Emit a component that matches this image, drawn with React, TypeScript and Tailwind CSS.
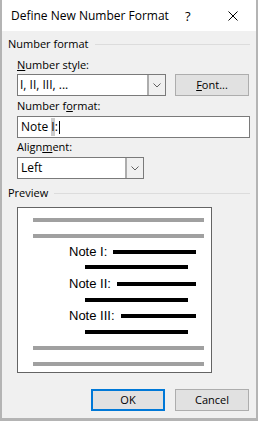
import React from "react";

function Chevron() {
  return (
    <svg width="8" height="5" viewBox="0 0 8 5">
      <path d="M0.5 0.5 L4 4 L7.5 0.5" fill="none" stroke="#606060" strokeWidth="1" />
    </svg>
  );
}

function DropButton() {
  return (
    <div className="w-[18px] h-full flex items-center justify-center border-l-2 border-[#adadad] bg-[#f0f0f0]">
      <Chevron />
    </div>
  );
}

function GroupHeader({ label, mt }: { label: string; mt: string }) {
  return (
    <div className={`flex items-center h-[16px] ${mt}`}>
      <span className="leading-[16px]">{label}</span>
      <div className="flex-1 h-px bg-[#dcdcdc] ml-[6px]" />
    </div>
  );
}

function NoteRow({ label, mt }: { label: string; mt: string }) {
  return (
    <div className={`flex items-center h-[16px] ml-[36px] w-[127px] ${mt}`}>
      <span className="font-['Liberation_Sans'] text-[13px] leading-[16px] text-black">{label}</span>
      <div className="flex-1 h-[4px] bg-black ml-[6px]" />
    </div>
  );
}

function SubLine({ mt }: { mt: string }) {
  return <div className={`ml-[52px] w-[103px] h-[4px] bg-black ${mt}`} />;
}

export default function App() {
  return (
    <div className="w-[258px] h-[421px] border-x-2 border-b-[3px] border-[#b4b4b4] bg-[#f0f0f0] flex flex-col font-['Open_Sans'] text-[11px] text-black">
      {/* Title bar */}
      <div className="h-[31px] bg-white flex items-center pl-[9px] shrink-0">
        <span className="flex-1 text-[12px] leading-[16px]">Define New Number Format</span>
        <span className="text-[13px] leading-[16px] w-[7px]">?</span>
        <svg width="10" height="10" viewBox="0 0 10 10" className="ml-[36px] mr-[18px]">
          <path d="M0.5 0.5 L9.5 9.5 M9.5 0.5 L0.5 9.5" stroke="#000" strokeWidth="1" />
        </svg>
      </div>

      {/* Body */}
      <div className="px-[6px] flex flex-col">
        <GroupHeader label="Number format" mt="mt-[5px]" />

        <div className="pl-[9px] flex flex-col">
          <div className="leading-[16px] h-[16px] mt-[5px]">
            <span className="underline underline-offset-[1px]">N</span>umber style:
          </div>
          <div className="flex mt-[1px]">
            <div className="flex w-[149px] h-[22px] bg-white border border-[#7a7a7a]">
              <div className="flex-1 flex items-center pl-[2px] text-[12px]">I, II, III, ...</div>
              <DropButton />
            </div>
            <div className="ml-[9px] w-[74px] h-[22px] bg-[#e1e1e1] border border-[#adadad] flex items-center justify-center">
              <span>
                <span className="underline underline-offset-[1px]">F</span>ont...
              </span>
            </div>
          </div>

          <div className="leading-[16px] h-[16px] mt-[2px]">
            Number f<span className="underline underline-offset-[1px]">o</span>rmat:
          </div>
          <div className="mt-[2px] w-[233px] h-[22px] bg-white border border-[#7a7a7a] flex items-center pl-[3px] text-[12px]">
            <span>Note </span>
            <span className="bg-[#cccccc] ml-[3px]">I</span>
            <span>:</span>
            <span className="w-px h-[13px] bg-black ml-[1px]" />
          </div>

          <div className="leading-[16px] h-[16px] mt-[1px]">
            Align<span className="underline underline-offset-[1px]">m</span>ent:
          </div>
          <div className="mt-[2px] flex w-[127px] h-[22px] bg-white border border-[#7a7a7a]">
            <div className="flex-1 flex items-center pl-[3px] text-[12px]">Left</div>
            <DropButton />
          </div>
        </div>

        <GroupHeader label="Preview" mt="mt-[6px]" />

        <div className="ml-[9px] mt-[6px] w-[195px] h-[166px] border border-[#646464] bg-white flex flex-col pl-[15px]">
          <div className="mt-[10px] w-[171px] h-[4px] bg-[#a0a0a0]" />
          <div className="mt-[12px] w-[171px] h-[4px] bg-[#a0a0a0]" />
          <NoteRow label="Note I:" mt="mt-[6px]" />
          <SubLine mt="mt-[5px]" />
          <NoteRow label="Note II:" mt="mt-[7px]" />
          <SubLine mt="mt-[6px]" />
          <NoteRow label="Note III:" mt="mt-[6px]" />
          <SubLine mt="mt-[6px]" />
          <div className="mt-[12px] w-[171px] h-[4px] bg-[#a0a0a0]" />
          <div className="mt-[12px] w-[171px] h-[4px] bg-[#a0a0a0]" />
        </div>

        <div className="mt-[16px] flex justify-end gap-[10px] pr-[1px]">
          <div className="w-[74px] h-[22px] bg-[#e1e1e1] border-2 border-[#0078d7] flex items-center justify-center">
            OK
          </div>
          <div className="w-[74px] h-[22px] bg-[#e1e1e1] border border-[#adadad] flex items-center justify-center">
            Cancel
          </div>
        </div>
      </div>
    </div>
  );
}
